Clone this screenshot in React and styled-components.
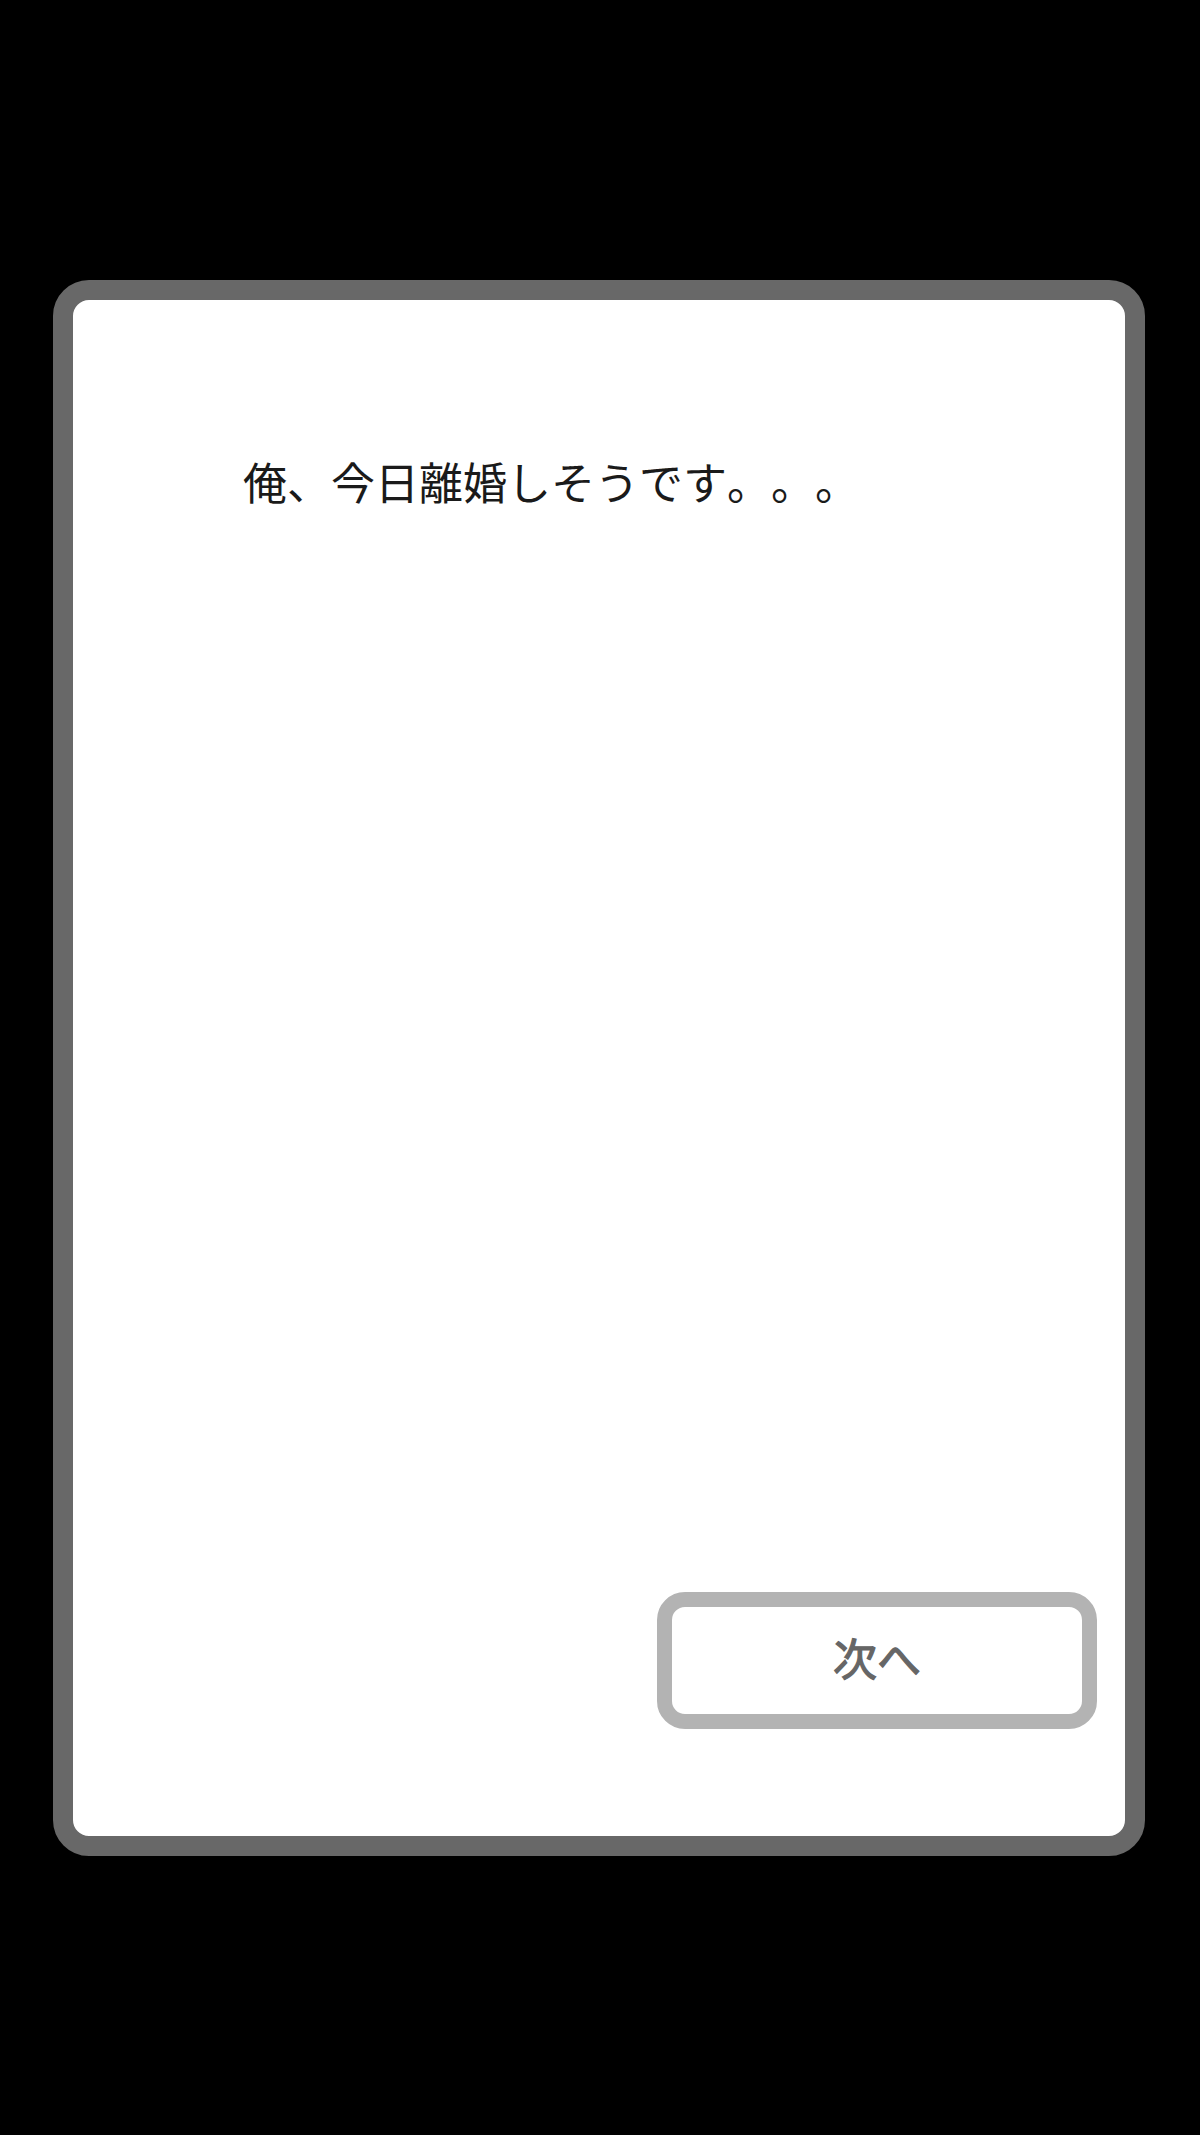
import styled, { createGlobalStyle } from 'styled-components';

const GlobalStyle = createGlobalStyle`
  html, body {
    margin: 0;
    padding: 0;
    background: #000;
  }
  body {
    font-family: "Noto Sans CJK JP", "Noto Sans", sans-serif;
  }
  * {
    box-sizing: border-box;
  }
`;

const Screen = styled.div`
  min-height: 2135px;
  padding: 280px 0 0 53px;
  background: #000;
`;

const Dialog = styled.section`
  display: flex;
  flex-direction: column;
  width: 1092px;
  height: 1576px;
  border: 20px solid #686868;
  border-radius: 36px;
  background: #fff;
`;

const Message = styled.p`
  margin: 0;
  padding: 148px 0 0 170px;
  font-size: 44px;
  line-height: 66px;
  color: #1a1a1a;
  text-spacing-trim: space-all;
  font-kerning: none;
`;

// medium weight isn't installed, so thicken the regular face a little
const NextButton = styled.button`
  align-self: flex-end;
  width: 440px;
  height: 137px;
  margin: auto 28px 107px 0;
  padding: 0 0 8px;
  border: 15px solid #b3b3b3;
  border-radius: 28px;
  background: #fff;
  font-family: "Noto Sans CJK JP", "Noto Sans", sans-serif;
  font-size: 44px;
  font-weight: 400;
  color: #666;
  -webkit-text-stroke: 1.2px #666;
  cursor: pointer;
`;

const App = () => {
  return (
    <Screen lang="ja">
      <GlobalStyle />
      <Dialog>
        <Message>俺、今日離婚しそうです。。。</Message>
        <NextButton type="button">次へ</NextButton>
      </Dialog>
    </Screen>
  );
};

export default App;
